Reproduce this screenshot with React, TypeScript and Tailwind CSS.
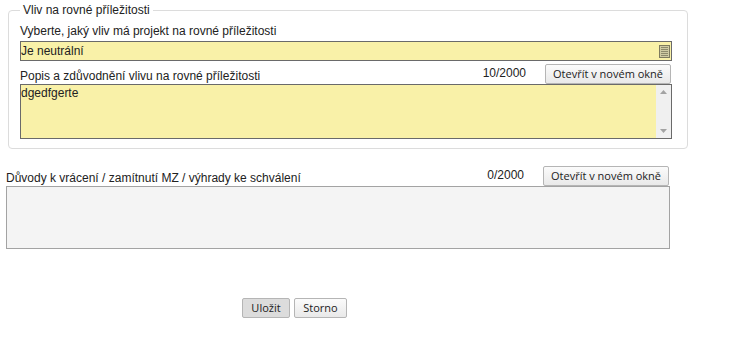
import React from "react";

const btn =
  "h-[20px] px-[7px] border border-[#b5b5b5] rounded-[2px] bg-gradient-to-b from-[#fbfbfb] to-[#e9e9e9] text-[11px] leading-[18px] text-[#222] [font-family:'Open_Sans','DejaVu_Sans',sans-serif]";

function SelectIcon() {
  return (
    <svg width="11" height="13" viewBox="0 0 11 13">
      <rect x="0.5" y="0.5" width="10" height="12" fill="#cfcba3" stroke="#7d7a5e" />
      <line x1="2" y1="2.5" x2="9" y2="2.5" stroke="#8d8a6c" />
      <line x1="2" y1="4.5" x2="9" y2="4.5" stroke="#8d8a6c" />
      <line x1="2" y1="6.5" x2="9" y2="6.5" stroke="#8d8a6c" />
      <line x1="2" y1="8.5" x2="9" y2="8.5" stroke="#8d8a6c" />
      <line x1="2" y1="10.5" x2="9" y2="10.5" stroke="#8d8a6c" />
    </svg>
  );
}

function Scrollbar() {
  return (
    <div className="w-[15px] h-full bg-[#f0f0f0] flex flex-col justify-between items-center py-[5px]">
      <svg width="7" height="4" viewBox="0 0 7 4">
        <path d="M0 4 L3.5 0 L7 4 Z" fill="#a3a3a3" />
      </svg>
      <svg width="7" height="4" viewBox="0 0 7 4">
        <path d="M0 0 L3.5 4 L7 0 Z" fill="#a3a3a3" />
      </svg>
    </div>
  );
}

export default function App() {
  return (
    <div className="w-[741px] h-[339px] bg-white text-[12px] text-[#222] [font-family:'Liberation_Sans',Arial,sans-serif] relative">
      <div className="pt-[3px] pl-[8px]">
        <fieldset className="w-[680px] h-[146px] border border-[#dcdcdc] rounded-[4px] pl-[11px] pr-[15px]">
          <legend className="ml-0 px-[3px] leading-[14px] text-[#222]">Vliv na rovné příležitosti</legend>
          <div className="leading-[14px] mt-[7px]">Vyberte, jaký vliv má projekt na rovné příležitosti</div>
          <div className="mt-[3px] h-[20px] border border-[#6a6a6a] bg-[#f9f1a8] flex items-center justify-between pl-[0px] pr-[1px]">
            <span className="leading-[14px]">Je neutrální</span>
            <SelectIcon />
          </div>
          <div className="mt-[3px] h-[20px] flex items-end">
            <span className="leading-[14px] mb-[1px]">Popis a zdůvodnění vlivu na rovné příležitosti</span>
            <span className="ml-auto leading-[14px] mb-[4px]">10/2000</span>
            <button className={btn + " ml-[19px] mr-[1px] h-[20px]"}>Otevřít v novém okně</button>
          </div>
          <div className="h-[55px] border border-[#6a6a6a] bg-[#f9f1a8] flex">
            <div className="flex-1 leading-[14px] pt-[1px]">dgedfgerte</div>
            <Scrollbar />
          </div>
        </fieldset>
      </div>

      <div className="pl-[6px] mt-[17px] w-[670px]">
        <div className="h-[20px] flex items-end">
          <span className="leading-[14px] mb-[1px]">Důvody k vrácení / zamítnutí MZ / výhrady ke schválení</span>
          <span className="ml-auto leading-[14px] mb-[4px]">0/2000</span>
          <button className={btn + " ml-[19px] mr-[1px]"}>Otevřít v novém okně</button>
        </div>
        <div className="h-[63px] border border-[#a3a3a3] bg-[#f4f4f4]"></div>
      </div>

      <div className="mt-[49px] flex gap-[4px] pl-[242px]">
        <button className={btn + " w-[48px] px-0 bg-none bg-[#dcdcdc] border-[#aaa]"}>Uložit</button>
        <button className={btn + " w-[53px] px-0"}>Storno</button>
      </div>
    </div>
  );
}
